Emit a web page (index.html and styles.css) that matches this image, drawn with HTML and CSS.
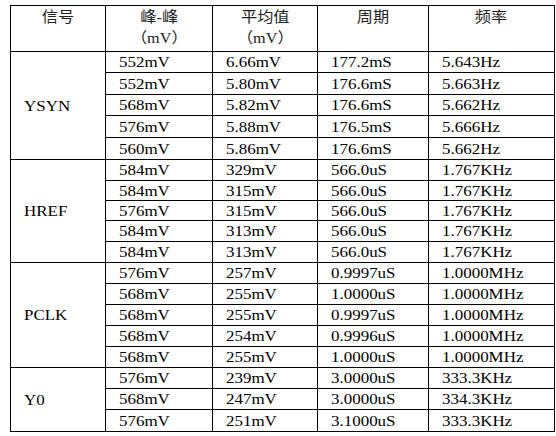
FILE: index.html
```html
<!DOCTYPE html>
<html lang="zh-CN">
<head>
<meta charset="utf-8">
<title>信号测量</title>
<link rel="stylesheet" href="styles.css">
</head>
<body>
<div class="wrap">
<table class="data">
  <colgroup>
    <col class="c1"><col class="c2"><col class="c3"><col class="c4"><col class="c5">
  </colgroup>
  <thead>
    <tr class="head">
      <th><span>信号</span></th>
      <th><span>峰-峰<br>（mV）</span></th>
      <th><span>平均值<br>（mV）</span></th>
      <th><span>周期</span></th>
      <th><span>频率</span></th>
    </tr>
  </thead>
  <tbody>
    <tr class="r21"><td class="sig" rowspan="5"><span>YSYN</span></td><td><span>552mV</span></td><td><span>6.66mV</span></td><td><span>177.2mS</span></td><td><span>5.643Hz</span></td></tr>
    <tr class="r22"><td><span>552mV</span></td><td><span>5.80mV</span></td><td><span>176.6mS</span></td><td><span>5.663Hz</span></td></tr>
    <tr class="r21"><td><span>568mV</span></td><td><span>5.82mV</span></td><td><span>176.6mS</span></td><td><span>5.662Hz</span></td></tr>
    <tr class="r22"><td><span>576mV</span></td><td><span>5.88mV</span></td><td><span>176.5mS</span></td><td><span>5.666Hz</span></td></tr>
    <tr class="r22"><td><span>560mV</span></td><td><span>5.86mV</span></td><td><span>176.6mS</span></td><td><span>5.662Hz</span></td></tr>

    <tr class="r21"><td class="sig" rowspan="5"><span>HREF</span></td><td><span>584mV</span></td><td><span>329mV</span></td><td><span>566.0uS</span></td><td><span>1.767KHz</span></td></tr>
    <tr class="r20"><td><span>584mV</span></td><td><span>315mV</span></td><td><span>566.0uS</span></td><td><span>1.767KHz</span></td></tr>
    <tr class="r20"><td><span>576mV</span></td><td><span>315mV</span></td><td><span>566.0uS</span></td><td><span>1.767KHz</span></td></tr>
    <tr class="r21"><td><span>584mV</span></td><td><span>313mV</span></td><td><span>566.0uS</span></td><td><span>1.767KHz</span></td></tr>
    <tr class="r21"><td><span>584mV</span></td><td><span>313mV</span></td><td><span>566.0uS</span></td><td><span>1.767KHz</span></td></tr>

    <tr class="r21"><td class="sig" rowspan="5"><span>PCLK</span></td><td><span>576mV</span></td><td><span>257mV</span></td><td><span>0.9997uS</span></td><td><span>1.0000MHz</span></td></tr>
    <tr class="r21"><td><span>568mV</span></td><td><span>255mV</span></td><td><span>1.0000uS</span></td><td><span>1.0000MHz</span></td></tr>
    <tr class="r21"><td><span>568mV</span></td><td><span>255mV</span></td><td><span>0.9997uS</span></td><td><span>1.0000MHz</span></td></tr>
    <tr class="r21"><td><span>568mV</span></td><td><span>254mV</span></td><td><span>0.9996uS</span></td><td><span>1.0000MHz</span></td></tr>
    <tr class="r21"><td><span>568mV</span></td><td><span>255mV</span></td><td><span>1.0000uS</span></td><td><span>1.0000MHz</span></td></tr>

    <tr class="r21"><td class="sig" rowspan="3"><span>Y0</span></td><td><span>576mV</span></td><td><span>239mV</span></td><td><span>3.0000uS</span></td><td><span>333.3KHz</span></td></tr>
    <tr class="r21"><td><span>568mV</span></td><td><span>247mV</span></td><td><span>3.0000uS</span></td><td><span>334.3KHz</span></td></tr>
    <tr class="r22"><td><span>576mV</span></td><td><span>251mV</span></td><td><span>3.1000uS</span></td><td><span>333.3KHz</span></td></tr>
  </tbody>
</table>
</div>
</body>
</html>
```

FILE: styles.css
```css
html, body {
  margin: 0;
  padding: 0;
  background: #ffffff;
}

.wrap {
  padding: 5px 0 0 10px;
}

.data {
  border-collapse: collapse;
  table-layout: fixed;
  width: 544px;
  font-family: "Liberation Serif", "Noto Sans CJK SC", serif;
  color: #000;
}

.c1 { width: 95px; }
.c2 { width: 107px; }
.c3 { width: 105px; }
.c4 { width: 111px; }
.c5 { width: 126px; }

.data th,
.data td {
  border: 1px solid #000;
  padding: 0;
}

.data th {
  font-weight: normal;
  font-size: 15px;
  line-height: 21px;
  text-align: center;
  vertical-align: top;
  padding-top: 1px;
  color: #222;
}

.head { height: 46px; }

.data th span {
  display: inline-block;
  transform: scaleX(1.08);
  transform-origin: 50% 50%;
}

.data td {
  font-size: 15px;
  line-height: 16px;
  vertical-align: middle;
  text-align: left;
  padding-left: 13px;
}

.data td span {
  display: inline-block;
  transform: scaleX(1.13);
  transform-origin: 0 50%;
}

.r20 { height: 20px; }
.r21 { height: 21px; }
.r22 { height: 22px; }
```
